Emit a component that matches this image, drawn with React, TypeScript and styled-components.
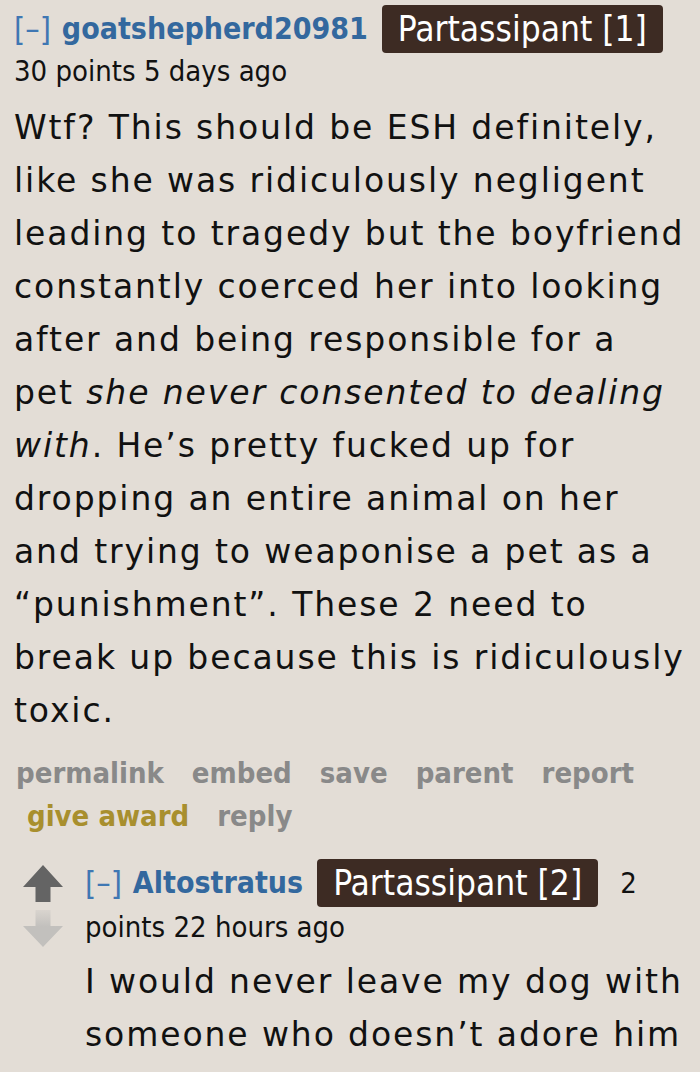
import React from 'react';
import styled, { createGlobalStyle } from 'styled-components';

const Global = createGlobalStyle`
  html, body { margin: 0; padding: 0; background: #e3ddd6; }
  body { width: 700px; height: 1072px; overflow: hidden; }
`;

const Page = styled.div`
  padding: 5px 0 0 14px;
  font-family: 'DejaVu Sans', Verdana, sans-serif;
  color: #111;
`;

const Comment = styled.div`
  display: flex;
  gap: 22px;
`;

const Votes = styled.div`
  display: flex;
  flex-direction: column;
  align-items: center;
  gap: 7px;
  padding: 6px 0 0 9px;
  width: 40px;
`;

const Entry = styled.div`
  flex: 1;
  min-width: 0;
`;

const Tagline = styled.div<{ $line?: number }>`
  display: flex;
  flex-wrap: wrap;
  align-items: center;
  column-gap: 14px;
  font-family: 'DejaVu Sans Condensed', 'DejaVu Sans', sans-serif;
  font-size: 29px;
  line-height: ${(p) => p.$line ?? 44}px;
`;

const Toggle = styled.span`
  color: #3f77b3;
  font-size: 32px;
  margin-right: -3px;
`;

const Author = styled.span`
  color: #33689e;
  font-weight: bold;
  font-size: 30px;
`;

const Flair = styled.span`
  background: #3d2b23;
  color: #fff;
  border-radius: 4px;
  padding: 0 16px;
  font-size: 35px;
  line-height: 48px;
`;

const Meta = styled.span<{ $gap?: number }>`
  color: #111;
  margin-left: ${(p) => p.$gap ?? 0}px;
`;

const Body = styled.div<{ $top?: number }>`
  margin-top: ${(p) => p.$top ?? 4}px;
  font-size: 33px;
  letter-spacing: 1.9px;
  line-height: 53px;
  color: #111;
  white-space: nowrap;
`;

const Buttons = styled.div`
  margin-top: 15px;
  display: flex;
  flex-wrap: wrap;
  column-gap: 28px;
  width: 650px;
  padding-left: 2px;
  font-family: 'DejaVu Sans Condensed', 'DejaVu Sans', sans-serif;
  font-weight: bold;
  font-size: 29px;
  line-height: 43px;
`;

const Action = styled.span<{ $gold?: boolean }>`
  color: ${(p) => (p.$gold ? '#a88f2e' : '#898989')};
  padding-left: ${(p) => (p.$gold ? '11px' : '0')};
`;

const Child = styled.div`
  margin-top: 21px;
`;

const UpArrow: React.FC = () => (
  <svg width="40" height="38" viewBox="0 0 40 38">
    <path d="M20 0 L40 22 L27.5 22 L27.5 37 L12.5 37 L12.5 22 L0 22 Z" fill="#646464" />
  </svg>
);

const DownArrow: React.FC = () => (
  <svg width="40" height="38" viewBox="0 0 40 38">
    <defs>
      <linearGradient id="fade" x1="0" y1="0" x2="0" y2="1">
        <stop offset="0" stopColor="#c2c0bd" stopOpacity="0.3" />
        <stop offset="0.45" stopColor="#c2c0bd" />
      </linearGradient>
    </defs>
    <path d="M12.5 0 L27.5 0 L27.5 16 L40 16 L20 37 L0 16 L12.5 16 Z" fill="url(#fade)" />
  </svg>
);

const App: React.FC = () => {
  return (
    <Page>
      <Global />
      <Tagline>
        <Toggle>[–]</Toggle>
        <Author>goatshepherd20981</Author>
        <Flair>Partassipant [1]</Flair>
      </Tagline>
      <Tagline $line={36}>
        <Meta>30 points 5 days ago</Meta>
      </Tagline>
      <Body $top={12}>
        Wtf? This should be ESH definitely,
        <br />
        like she was ridiculously negligent
        <br />
        leading to tragedy but the boyfriend
        <br />
        constantly coerced her into looking
        <br />
        after and being responsible for a
        <br />
        pet <em>she never consented to dealing</em>
        <br />
        <em>with</em>. He’s pretty fucked up for
        <br />
        dropping an entire animal on her
        <br />
        and trying to weaponise a pet as a
        <br />
        “punishment”. These 2 need to
        <br />
        break up because this is ridiculously
        <br />
        toxic.
      </Body>
      <Buttons>
        <Action>permalink</Action>
        <Action>embed</Action>
        <Action>save</Action>
        <Action>parent</Action>
        <Action>report</Action>
        <Action $gold>give award</Action>
        <Action>reply</Action>
      </Buttons>
      <Child>
        <Comment>
          <Votes>
            <UpArrow />
            <DownArrow />
          </Votes>
          <Entry>
            <Tagline $line={40}>
              <Toggle>[–]</Toggle>
              <Author>Altostratus</Author>
              <Flair>Partassipant [2]</Flair>
              <Meta $gap={8}>2</Meta>
              <Meta>points 22 hours ago</Meta>
            </Tagline>
            <Body $top={8}>
              I would never leave my dog with
              <br />
              someone who doesn’t adore him
            </Body>
          </Entry>
        </Comment>
      </Child>
    </Page>
  );
};

export default App;
